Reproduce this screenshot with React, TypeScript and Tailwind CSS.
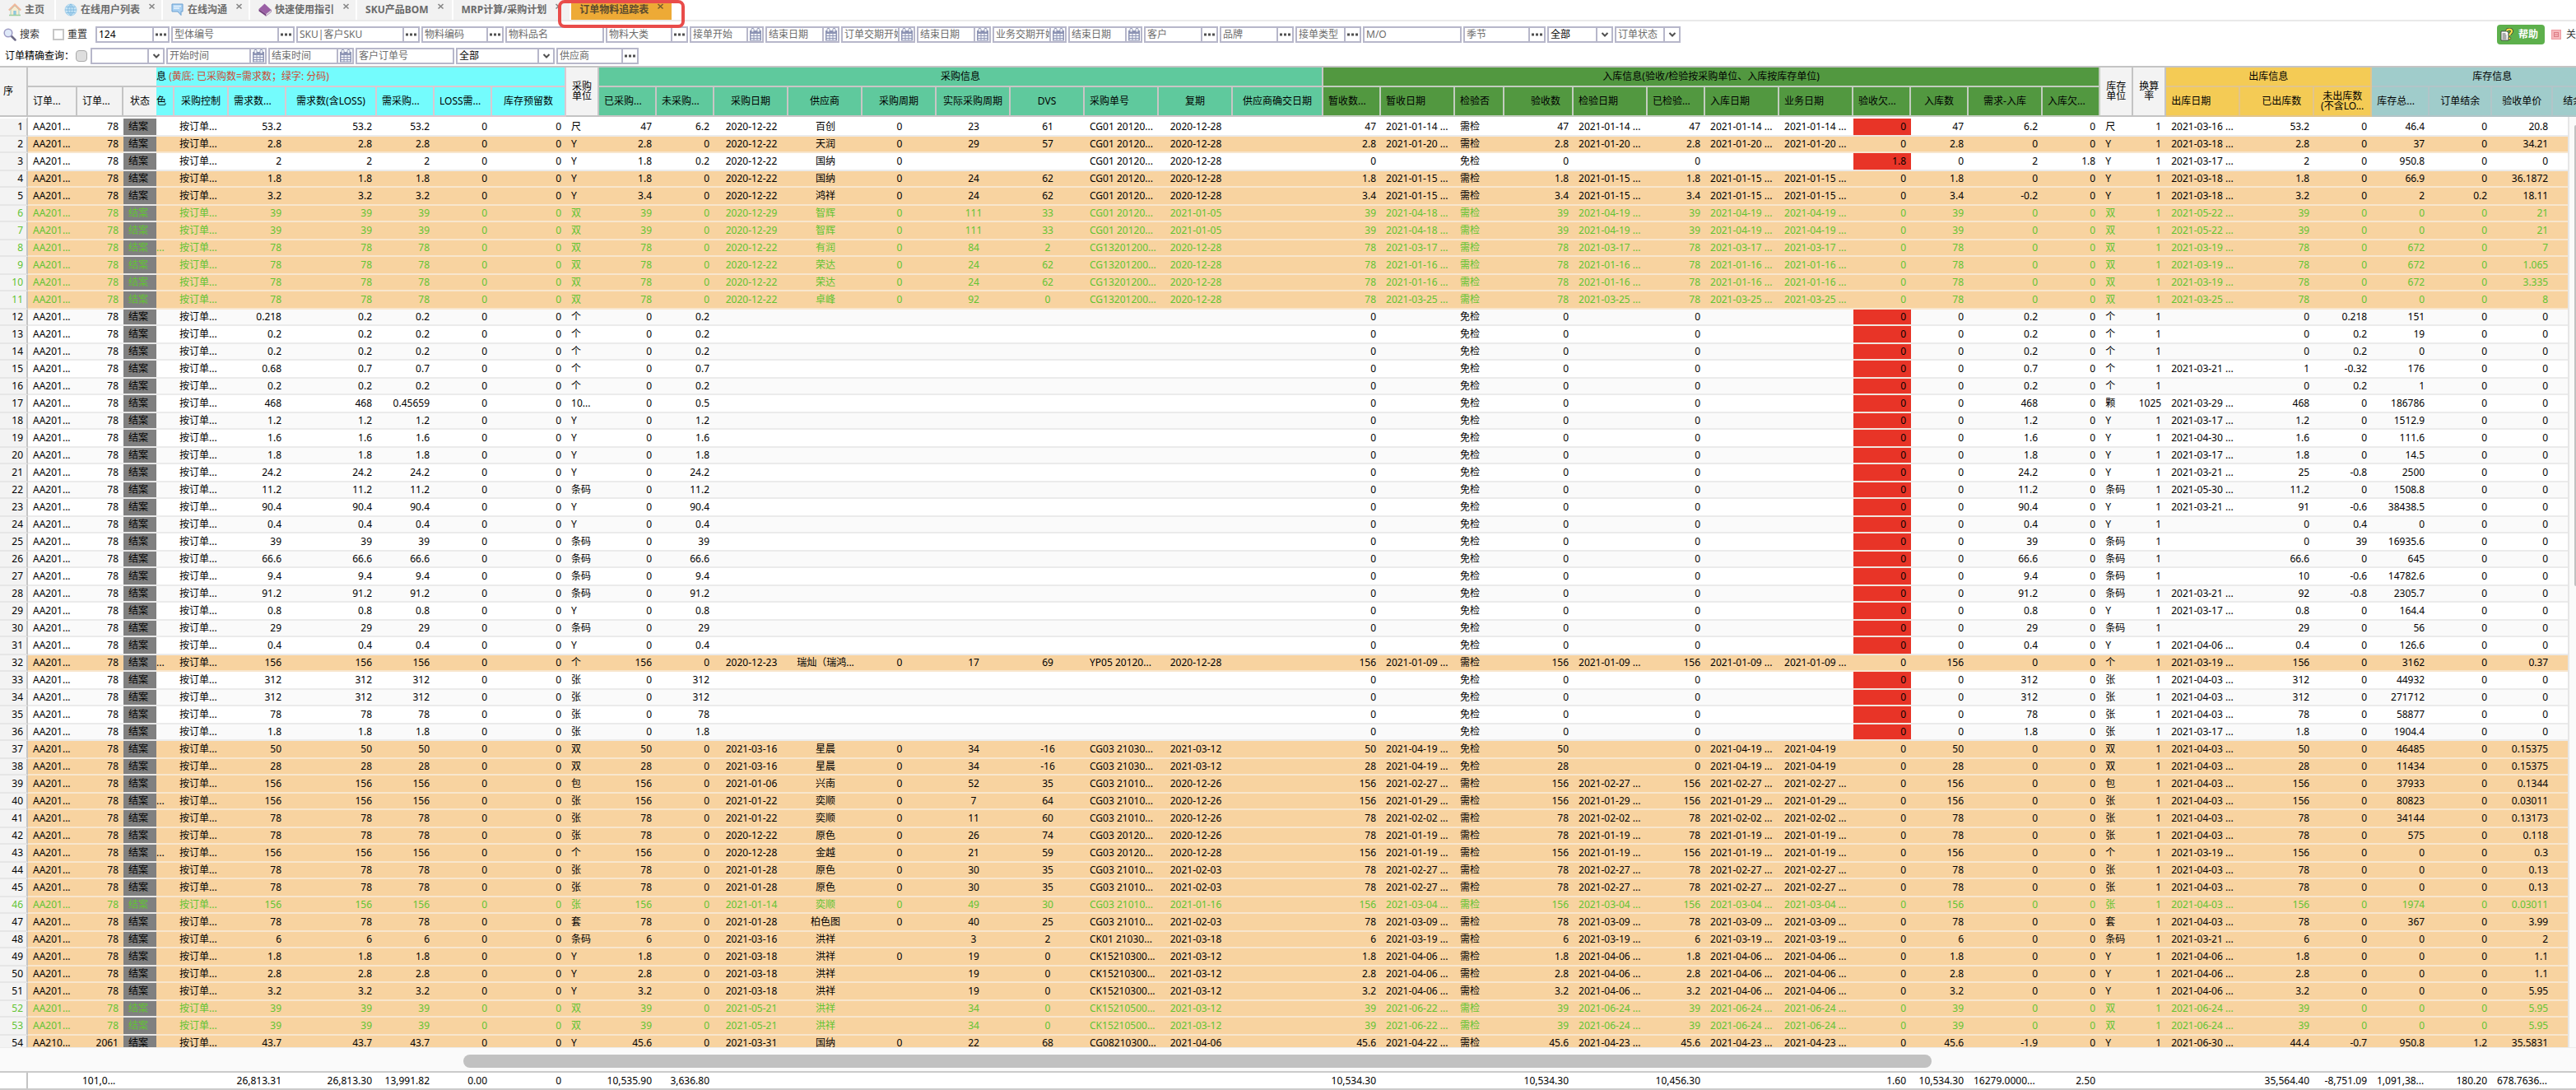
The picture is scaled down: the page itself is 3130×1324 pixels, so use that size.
import { useState } from "react";
import type { ReactNode } from "react";
import clsx from "clsx";

interface Row {
  order: string;
  qty: string;
  note: string;
  need: string;
  needLoss: string;
  needBuy: string;
  unit: string;
  bought: string;
  unbought: string;
  buyDate: string;
  supplier: string;
  cycle: string;
  realCycle: string;
  dvs: string;
  po: string;
  replyDate: string;
  recvQty: string;
  recvDate: string;
  check: string;
  acceptQty: string;
  inspDate: string;
  inspected: string;
  inDate: string;
  bizDate: string;
  owe: string;
  inQty: string;
  diff: string;
  inOwe: string;
  stockUnit: string;
  rate: string;
  outDate: string;
  outQty: string;
  notOut: string;
  stock: string;
  left: string;
  price: string;
  full: boolean;
  split: boolean;
}

const more = (s: string) => (s ? `${s} ...` : "");

// 未采购的物料
const idle = (
  need: string,
  unit: string,
  outDate: string,
  outQty: string,
  notOut: string,
  stock: string,
  extra: Partial<Row> = {}
): Row => ({
  order: "AA201...",
  qty: "78",
  note: "",
  need,
  needLoss: need,
  needBuy: need,
  unit,
  bought: "0",
  unbought: need,
  buyDate: "",
  supplier: "",
  cycle: "",
  realCycle: "",
  dvs: "",
  po: "",
  replyDate: "",
  recvQty: "0",
  recvDate: "",
  check: "免检",
  acceptQty: "0",
  inspDate: "",
  inspected: "0",
  inDate: "",
  bizDate: "",
  owe: "0",
  inQty: "0",
  diff: need,
  inOwe: "0",
  stockUnit: unit,
  rate: "1",
  outDate: more(outDate),
  outQty,
  notOut,
  stock,
  left: "0",
  price: "0",
  full: false,
  split: false,
  ...extra,
});

// 已采购的物料: buy = [日期, 供应商, 周期, 实际周期, DVS, 单号, 复期]
const done = (
  need: string,
  unit: string,
  buy: string[],
  inDate: string,
  outDate: string,
  stock: string,
  price: string,
  extra: Partial<Row> = {}
): Row => {
  const bought = extra.bought ?? need;
  return idle(need, unit, outDate, need, "0", stock, {
    bought,
    unbought: "0",
    buyDate: buy[0],
    supplier: buy[1],
    cycle: buy[2],
    realCycle: buy[3],
    dvs: buy[4],
    po: buy[5],
    replyDate: buy[6],
    recvQty: bought,
    recvDate: more(inDate),
    check: "需检",
    acceptQty: bought,
    inspDate: more(inDate),
    inspected: bought,
    inDate: more(inDate),
    bizDate: more(inDate),
    inQty: bought,
    diff: "0",
    price,
    full: true,
    ...extra,
  });
};

const green = { split: true };
const noted = { note: "..." };
const xingchen = ["2021-03-16", "星晨", "0", "34", "-16", "CG03 21030...", "2021-03-12"];
const noInspect = { check: "免检", inspDate: "", inspected: "0", bizDate: "2021-04-19" };
const zhihui = ["2020-12-29", "智辉", "0", "111", "33", "CG01 20120...", "2021-01-05"];
const rongda = ["2020-12-22", "荣达", "0", "24", "62", "CG13201200...", "2020-12-28"];
const yuanse = ["2021-01-28", "原色", "0", "30", "35", "CG03 21010...", "2021-02-03"];
const hongxiang = ["2021-05-21", "洪祥", "", "34", "0", "CK15210500...", "2021-03-12"];

const rows: Row[] = [
  done("53.2", "尺", ["2020-12-22", "百创", "0", "23", "61", "CG01 20120...", "2020-12-28"], "2021-01-14", "2021-03-16", "46.4", "20.8", { bought: "47", unbought: "6.2", diff: "6.2", full: false }),
  done("2.8", "Y", ["2020-12-22", "天润", "0", "29", "57", "CG01 20120...", "2020-12-28"], "2021-01-20", "2021-03-18", "37", "34.21"),
  idle("2", "Y", "2021-03-17", "2", "0", "950.8", { bought: "1.8", unbought: "0.2", buyDate: "2020-12-22", supplier: "国纳", cycle: "0", po: "CG01 20120...", replyDate: "2020-12-28", owe: "1.8", inOwe: "1.8" }),
  done("1.8", "Y", ["2020-12-22", "国纳", "0", "24", "62", "CG01 20120...", "2020-12-28"], "2021-01-15", "2021-03-18", "66.9", "36.1872"),
  done("3.2", "Y", ["2020-12-22", "鸿祥", "0", "24", "62", "CG01 20120...", "2020-12-28"], "2021-01-15", "2021-03-18", "2", "18.11", { bought: "3.4", diff: "-0.2", left: "0.2" }),
  done("39", "双", zhihui, "2021-04-19", "2021-05-22", "0", "21", { ...green, recvDate: "2021-04-18 ..." }),
  done("39", "双", zhihui, "2021-04-19", "2021-05-22", "0", "21", { ...green, recvDate: "2021-04-18 ..." }),
  done("78", "双", ["2020-12-22", "有润", "0", "84", "2", "CG13201200...", "2020-12-28"], "2021-03-17", "2021-03-19", "672", "7", { ...green, ...noted }),
  done("78", "双", rongda, "2021-01-16", "2021-03-19", "672", "1.065", green),
  done("78", "双", rongda, "2021-01-16", "2021-03-19", "672", "3.335", green),
  done("78", "双", ["2020-12-22", "卓峰", "0", "92", "0", "CG13201200...", "2020-12-28"], "2021-03-25", "2021-03-25", "0", "8", green),
  idle("0.2", "个", "", "0", "0.218", "151", { need: "0.218" }),
  idle("0.2", "个", "", "0", "0.2", "19"),
  idle("0.2", "个", "", "0", "0.2", "0"),
  idle("0.7", "个", "2021-03-21", "1", "-0.32", "176", { need: "0.68" }),
  idle("0.2", "个", "", "0", "0.2", "1"),
  idle("468", "10...", "2021-03-29", "468", "0", "186786", { needBuy: "0.45659", unbought: "0.5", stockUnit: "颗", rate: "1025" }),
  idle("1.2", "Y", "2021-03-17", "1.2", "0", "1512.9"),
  idle("1.6", "Y", "2021-04-30", "1.6", "0", "111.6"),
  idle("1.8", "Y", "2021-03-17", "1.8", "0", "14.5"),
  idle("24.2", "Y", "2021-03-21", "25", "-0.8", "2500"),
  idle("11.2", "条码", "2021-05-30", "11.2", "0", "1508.8"),
  idle("90.4", "Y", "2021-03-21", "91", "-0.6", "38438.5"),
  idle("0.4", "Y", "", "0", "0.4", "0"),
  idle("39", "条码", "", "0", "39", "16935.6"),
  idle("66.6", "条码", "", "66.6", "0", "645"),
  idle("9.4", "条码", "", "10", "-0.6", "14782.6"),
  idle("91.2", "条码", "2021-03-21", "92", "-0.8", "2305.7"),
  idle("0.8", "Y", "2021-03-17", "0.8", "0", "164.4"),
  idle("29", "条码", "", "29", "0", "56"),
  idle("0.4", "Y", "2021-04-06", "0.4", "0", "126.6"),
  done("156", "个", ["2020-12-23", "瑞灿（瑞鸿...", "0", "17", "69", "YP05 20120...", "2020-12-28"], "2021-01-09", "2021-03-19", "3162", "0.37", noted),
  idle("312", "张", "2021-04-03", "312", "0", "44932"),
  idle("312", "张", "2021-04-03", "312", "0", "271712"),
  idle("78", "张", "2021-04-03", "78", "0", "58877"),
  idle("1.8", "张", "2021-03-17", "1.8", "0", "1904.4"),
  done("50", "双", xingchen, "2021-04-19", "2021-04-03", "46485", "0.15375", noInspect),
  done("28", "双", xingchen, "2021-04-19", "2021-04-03", "11434", "0.15375", noInspect),
  done("156", "包", ["2021-01-06", "兴南", "0", "52", "35", "CG03 21010...", "2020-12-26"], "2021-02-27", "2021-04-03", "37933", "0.1344"),
  done("156", "张", ["2021-01-22", "奕顺", "0", "7", "64", "CG03 21010...", "2020-12-26"], "2021-01-29", "2021-04-03", "80823", "0.03011", noted),
  done("78", "张", ["2021-01-22", "奕顺", "0", "11", "60", "CG03 21010...", "2020-12-26"], "2021-02-02", "2021-04-03", "34144", "0.13173"),
  done("78", "张", ["2020-12-22", "原色", "0", "26", "74", "CG03 20120...", "2020-12-26"], "2021-01-19", "2021-04-03", "575", "0.118"),
  done("156", "个", ["2020-12-28", "金越", "0", "21", "59", "CG03 20120...", "2020-12-28"], "2021-01-19", "2021-03-19", "0", "0.3", noted),
  done("78", "张", yuanse, "2021-02-27", "2021-04-03", "0", "0.13"),
  done("78", "张", yuanse, "2021-02-27", "2021-04-03", "0", "0.13"),
  done("156", "张", ["2021-01-14", "奕顺", "0", "49", "30", "CG03 21010...", "2021-01-16"], "2021-03-04", "2021-04-03", "1974", "0.03011", green),
  done("78", "套", ["2021-01-28", "柏色图", "0", "40", "25", "CG03 21010...", "2021-02-03"], "2021-03-09", "2021-04-03", "367", "3.99"),
  done("6", "条码", ["2021-03-16", "洪祥", "", "3", "2", "CK01 21030...", "2021-03-18"], "2021-03-19", "2021-03-21", "0", "2"),
  done("1.8", "Y", ["2021-03-18", "洪祥", "0", "19", "0", "CK15210300...", "2021-03-12"], "2021-04-06", "2021-04-06", "0", "1.1"),
  done("2.8", "Y", ["2021-03-18", "洪祥", "", "19", "0", "CK15210300...", "2021-03-12"], "2021-04-06", "2021-04-06", "0", "1.1"),
  done("3.2", "Y", ["2021-03-18", "洪祥", "", "19", "0", "CK15210300...", "2021-03-12"], "2021-04-06", "2021-04-06", "0", "5.95"),
  done("39", "双", hongxiang, "2021-06-24", "2021-06-24", "0", "5.95", { ...green, recvDate: "2021-06-22 ..." }),
  done("39", "双", hongxiang, "2021-06-24", "2021-06-24", "0", "5.95", { ...green, recvDate: "2021-06-22 ..." }),
  done("43.7", "Y", ["2021-03-31", "国纳", "0", "22", "68", "CG08210300...", "2021-04-06"], "2021-04-23", "2021-06-30", "950.8", "35.5831", { order: "AA210...", qty: "2061", bought: "45.6", recvDate: "2021-04-22 ...", diff: "-1.9", outQty: "44.4", notOut: "-0.7", left: "1.2" }),
];

interface Column {
  id: string;
  label: string;
  width: string;
  get: (r: Row) => string;
  align?: string;
  head?: string;
  wrap?: boolean;
  total?: string;
  totalAlign?: string;
}

const R = "text-right";
const C = "text-center";
const L = "text-left";

const plain = "bg-[#f3f3f3] border-[#c4c4c4]";
const cyan = "bg-[#74fcfd] border-[#dcc8d0]";
const mint = "bg-[#5fc99d] border-[#c9c5c5]";
const leaf = "bg-[#529840] border-[#c3cdbf]";
const amber = "bg-[#f4cb55] border-[#e2c58c]";
const teal = "bg-[#a0cccb] border-[#b2c5c8]";

const frozen: Column[] = [
  { id: "order", label: "订单...", width: "w-[60px]", get: (r) => r.order, align: L },
  { id: "qty", label: "订单...", width: "w-[56px]", get: (r) => r.qty, total: "101,0...", totalAlign: L },
  { id: "status", label: "状态", width: "w-[40px]", get: () => "结案", align: L, head: C },
];

const need: Column[] = [
  { id: "note", label: "色", width: "w-[22px]", get: (r) => r.note, align: L },
  { id: "control", label: "采购控制", width: "w-[66px]", get: () => "按订单...", align: L, head: C },
  { id: "need", label: "需求数...", width: "w-[70px]", get: (r) => r.need, total: "26,813.31" },
  { id: "needLoss", label: "需求数(含LOSS)", width: "w-[110px]", get: (r) => r.needLoss, head: C, total: "26,813.30" },
  { id: "needBuy", label: "需采购...", width: "w-[70px]", get: (r) => r.needBuy, total: "13,991.82" },
  { id: "loss", label: "LOSS需...", width: "w-[70px]", get: () => "0", total: "0.00" },
  { id: "reserve", label: "库存预留数", width: "w-[90px]", get: () => "0", head: C, total: "0" },
];

const unitCol: Column = { id: "unit", label: "采购单位", width: "w-[40px]", get: (r) => r.unit, align: L };

const buy: Column[] = [
  { id: "bought", label: "已采购...", width: "w-[70px]", get: (r) => r.bought, total: "10,535.90" },
  { id: "unbought", label: "未采购...", width: "w-[70px]", get: (r) => r.unbought, total: "3,636.80" },
  { id: "buyDate", label: "采购日期", width: "w-[90px]", get: (r) => r.buyDate, align: C, head: C },
  { id: "supplier", label: "供应商", width: "w-[90px]", get: (r) => r.supplier, align: C, head: C },
  { id: "cycle", label: "采购周期", width: "w-[90px]", get: (r) => r.cycle, align: C, head: C },
  { id: "realCycle", label: "实际采购周期", width: "w-[90px]", get: (r) => r.realCycle, align: C, head: C },
  { id: "dvs", label: "DVS", width: "w-[90px]", get: (r) => r.dvs, align: C, head: C },
  { id: "po", label: "采购单号", width: "w-[90px]", get: (r) => r.po, align: L },
  { id: "replyDate", label: "复期", width: "w-[90px]", get: (r) => r.replyDate, align: C, head: C },
  { id: "confirm", label: "供应商确交日期", width: "w-[110px]", get: () => "", head: C },
];

const stockIn: Column[] = [
  { id: "recvQty", label: "暂收数...", width: "w-[70px]", get: (r) => r.recvQty, total: "10,534.30" },
  { id: "recvDate", label: "暂收日期", width: "w-[90px]", get: (r) => r.recvDate, align: L },
  { id: "check", label: "检验否", width: "w-[60px]", get: (r) => r.check, align: L },
  { id: "acceptQty", label: "验收数", width: "w-[84px]", get: (r) => r.acceptQty, head: "text-right pr-3.5", total: "10,534.30" },
  { id: "inspDate", label: "检验日期", width: "w-[90px]", get: (r) => r.inspDate, align: L },
  { id: "inspected", label: "已检验...", width: "w-[70px]", get: (r) => r.inspected, total: "10,456.30" },
  { id: "inDate", label: "入库日期", width: "w-[90px]", get: (r) => r.inDate, align: L },
  { id: "bizDate", label: "业务日期", width: "w-[90px]", get: (r) => r.bizDate, align: L },
  { id: "owe", label: "验收欠...", width: "w-[70px]", get: (r) => r.owe, total: "1.60" },
  { id: "inQty", label: "入库数", width: "w-[70px]", get: (r) => r.inQty, head: C, total: "10,534.30" },
  { id: "diff", label: "需求-入库", width: "w-[90px]", get: (r) => r.diff, head: C, total: "16279.0000...", totalAlign: L },
  { id: "inOwe", label: "入库欠...", width: "w-[70px]", get: (r) => r.inOwe, total: "2.50" },
];

const stockUnitCol: Column = { id: "stockUnit", label: "库存单位", width: "w-[40px]", get: (r) => r.stockUnit, align: L };
const rateCol: Column = { id: "rate", label: "换算率", width: "w-[40px]", get: (r) => r.rate };

const stockOut: Column[] = [
  { id: "outDate", label: "出库日期", width: "w-[90px]", get: (r) => r.outDate, align: L },
  { id: "outQty", label: "已出库数", width: "w-[90px]", get: (r) => r.outQty, head: "text-right pr-3.5", total: "35,564.40" },
  { id: "notOut", label: "未出库数 (不含LO...", width: "w-[70px]", get: (r) => r.notOut, head: C, wrap: true, total: "-8,751.09" },
];

const stock: Column[] = [
  { id: "stock", label: "库存总...", width: "w-[70px]", get: (r) => r.stock, total: "1,091,38...", totalAlign: L },
  { id: "left", label: "订单结余", width: "w-[76px]", get: (r) => r.left, head: C, total: "180.20" },
  { id: "price", label: "验收单价", width: "w-[74px]", get: (r) => r.price, head: C, total: "678.7636...", totalAlign: L },
  { id: "remain", label: "结余单价", width: "w-[74px]", get: () => "", head: C },
];

const groups = [
  { cols: need, tone: cyan },
  { cols: buy, tone: mint },
  { cols: stockIn, tone: leaf },
  { cols: stockOut, tone: amber },
  { cols: stock, tone: teal },
];

const columns: Column[] = [
  ...frozen,
  ...need,
  unitCol,
  ...buy,
  ...stockIn,
  stockUnitCol,
  rateCol,
  ...stockOut,
  ...stock,
];

const Cols = () => (
  <colgroup>
    <col className="w-[34px]" />
    {columns.map((c) => (
      <col key={c.id} className={c.width} />
    ))}
  </colgroup>
);

const th = "overflow-hidden border-b-2 font-normal";
const single = "border-r-2 whitespace-nowrap";
const tall = "border-r-2 px-1.5 leading-3";

const TableHead = () => (
  <thead>
    <tr className="h-6">
      <th rowSpan={2} className={clsx(th, plain, single, "px-1 text-left")}>序</th>
      <th colSpan={3} className={clsx(th, plain)} />
      <th colSpan={need.length} className={clsx(th, cyan, single, "text-left")}>
        息 <span className="text-[#d04a35]">(黄底: 已采购数=需求数；绿字: 分码)</span>
      </th>
      <th rowSpan={2} className={clsx(th, plain, tall)}>{unitCol.label}</th>
      <th colSpan={buy.length} className={clsx(th, mint, single)}>采购信息</th>
      <th colSpan={stockIn.length} className={clsx(th, leaf, single)}>
        入库信息(验收/检验按采购单位、入库按库存单位)
      </th>
      <th rowSpan={2} className={clsx(th, plain, tall)}>{stockUnitCol.label}</th>
      <th rowSpan={2} className={clsx(th, plain, tall)}>{rateCol.label}</th>
      <th colSpan={stockOut.length} className={clsx(th, amber, single)}>出库信息</th>
      <th colSpan={stock.length} className={clsx(th, teal, single)}>库存信息</th>
    </tr>
    <tr className="h-9">
      {frozen.map((c) => (
        <th key={c.id} className={clsx(th, plain, "px-1.5", c.head ?? L, c.id !== "status" && single)}>
          {c.label}
        </th>
      ))}
      {groups.map((g) =>
        g.cols.map((c) => (
          <th
            key={c.id}
            className={clsx(th, g.tone, c.id === "note" ? "px-0" : c.wrap ? "px-1" : "px-1.5", c.wrap ? "border-r-2 leading-3" : single, c.head ?? L)}
          >
            {c.label}
          </th>
        ))
      )}
    </tr>
  </thead>
);

const BodyRow = ({ row, index }: { row: Row; index: number }) => {
  const tone = row.full
    ? "bg-[#f8d3a0] border-[#f8e6cd]"
    : index % 2
      ? "bg-[#fafafa] border-[#ebebeb]"
      : "bg-white border-[#ebebeb]";
  return (
    <tr className={clsx(index % 2 ? "h-5" : "h-[22px]", row.split && "text-[#62c332]")}>
      <td className="border-r-2 border-b-2 border-r-[#c4c4c4] border-b-[#e6e6e6] bg-[#f3f3f3] pr-1 text-right">
        {index + 1}
      </td>
      {columns.map((c) => (
        <td
          key={c.id}
          className={clsx(
            "overflow-hidden border-b-2 whitespace-nowrap",
            c.id === "note" ? "px-0" : "px-1.5",
            c.align ?? R,
            c.id === "status"
              ? "border-[#e6e6e6] bg-[#808080]"
              : c.id === "owe" && !row.full
                ? "border-[#f0e4dc] bg-[#e83427]"
                : tone
          )}
        >
          {c.get(row)}
        </td>
      ))}
    </tr>
  );
};

const CalendarIcon = () => (
  <svg viewBox="0 0 16 16" className="size-4" aria-hidden="true">
    <rect x="1" y="3" width="14" height="12.5" fill="#8d94b4" />
    <rect x="3" y="0.5" width="3" height="4.5" rx="1" fill="#fff" stroke="#8d94b4" />
    <rect x="10" y="0.5" width="3" height="4.5" rx="1" fill="#fff" stroke="#8d94b4" />
    <path d="M2.5 7h3v2h-3zM6.5 7h3v2h-3zM10.5 7h3v2h-3zM2.5 10h3v2h-3zM6.5 10h3v2h-3zM10.5 10h3v2h-3zM2.5 13h3v1.5h-3zM6.5 13h3v1.5h-3zM10.5 13h3v1.5h-3z" fill="#f4f6fb" />
  </svg>
);

const DotsIcon = () => (
  <svg viewBox="0 0 15 4" className="h-1 w-[15px]" aria-hidden="true">
    <path d="M1 0.5h3v3H1zM6 0.5h3v3H6zM11 0.5h3v3h-3z" fill="#505050" />
  </svg>
);

const ChevronIcon = () => (
  <svg viewBox="0 0 10 6" className="h-1.5 w-2.5" aria-hidden="true">
    <path d="M1.5 1l3.5 3.5L8.5 1" fill="none" stroke="#505050" strokeWidth="2" />
  </svg>
);

const box = "flex h-5 shrink-0 border-2 border-[#b7b7ca] bg-white";
const side = "flex w-[17px] shrink-0 items-center justify-center border-l-2 border-[#b7b7ca] box-content";

interface FieldProps {
  label: string;
  width: string;
  kind?: "text" | "lookup" | "date";
  value?: string;
}

const Field = ({ label, width, kind = "text", value = "" }: FieldProps) => {
  const [text, setText] = useState(value);
  return (
    <div className={clsx(box, width)}>
      <input
        aria-label={label}
        placeholder={value ? "" : label}
        value={text}
        onChange={(e) => setText(e.target.value)}
        className="w-0 min-w-0 flex-1 pl-0.5 leading-4 outline-none placeholder:text-[#6c6c6c]"
      />
      {kind === "lookup" && (
        <button type="button" aria-label={`选择${label}`} className={side}>
          <DotsIcon />
        </button>
      )}
      {kind === "date" && (
        <button type="button" aria-label={`选择${label}`} className={side}>
          <CalendarIcon />
        </button>
      )}
    </div>
  );
};

const Choice = ({ label, width, option, dim }: { label: string; width: string; option: string; dim?: boolean }) => (
  <div className={clsx(box, width)}>
    <select
      aria-label={label}
      className={clsx("w-0 min-w-0 flex-1 appearance-none pl-0.5 leading-4 outline-none", dim && "text-[#6c6c6c]")}
    >
      <option>{option}</option>
    </select>
    <span className={side}>
      <ChevronIcon />
    </span>
  </div>
);

const HomeIcon = () => (
  <svg viewBox="0 0 16 16" className="size-4" aria-hidden="true">
    <path d="M3 8v6.5h10V8L8 3z" fill="#f7ecd0" stroke="#a8d0c4" />
    <path d="M0.8 8.5L8 1.5l7.2 7" fill="none" stroke="#f0b79a" strokeWidth="2" />
    <rect x="6.3" y="9" width="3.4" height="5.5" fill="#8fc8de" />
    <path d="M1 14.5h14" stroke="#9ccf9c" strokeWidth="1.5" />
  </svg>
);

const GlobeIcon = () => (
  <svg viewBox="0 0 16 16" className="size-4" aria-hidden="true">
    <circle cx="8" cy="8" r="7" fill="#c4e3f5" stroke="#a9d2ec" />
    <path d="M1 8h14M8 1v14M2.5 4.5h11M2.5 11.5h11M8 1C3.5 5 3.5 11 8 15M8 1c4.5 4 4.5 10 0 14" fill="none" stroke="#86bde2" />
  </svg>
);

const ChatIcon = () => (
  <svg viewBox="0 0 16 16" className="size-4" aria-hidden="true">
    <path d="M1 1h13v9h-2v4.5L8 10H1z" fill="#a9d0f2" stroke="#6b9fd0" />
    <path d="M3 3.5h9M3 6h7" stroke="#e9f4fd" strokeWidth="1.5" />
  </svg>
);

const BookIcon = () => (
  <svg viewBox="0 0 16 16" className="size-4" aria-hidden="true">
    <path d="M0.5 7L7.5 0.5 15.5 8 9 13z" fill="#9a5fa5" />
    <path d="M0.5 7v2.5L9 15.5V13z" fill="#75407f" />
    <path d="M9 13l6.5-5v2.5L9 15.5z" fill="#e6dfe8" stroke="#75407f" strokeWidth="0.5" />
  </svg>
);

const SearchIcon = () => (
  <svg viewBox="0 0 16 16" className="size-4" aria-hidden="true">
    <path d="M9.5 9.5l5 5" stroke="#6d6a86" strokeWidth="2.5" strokeLinecap="round" />
    <circle cx="6" cy="6" r="4.8" fill="#dfe9f8" stroke="#9d9bc4" strokeWidth="1.5" />
  </svg>
);

const HelpIcon = () => (
  <svg viewBox="0 0 16 16" className="size-4" aria-hidden="true">
    <path d="M1 4h7l2 2v9H1z" fill="#fff" stroke="#333" strokeWidth="0.8" />
    <path d="M2.5 7h4M2.5 9h5M2.5 11h5M2.5 13h5" stroke="#555" />
    <path d="M8 3.5C8.5 1 14 1 14 4c0 2.5-2.8 2.3-2.8 5" fill="none" stroke="#333" strokeWidth="3.6" />
    <path d="M8 3.5C8.5 1 14 1 14 4c0 2.5-2.8 2.3-2.8 5" fill="none" stroke="#f7e04a" strokeWidth="2.2" />
    <circle cx="11.2" cy="12.5" r="1.5" fill="#f7e04a" stroke="#333" strokeWidth="0.7" />
  </svg>
);

const CloseIcon = () => (
  <svg viewBox="0 0 12 12" className="size-3" aria-hidden="true">
    <rect x="0.5" y="0.5" width="11" height="11" fill="#f6b9bd" stroke="#ee9ca2" />
    <path d="M3 3.5h6M3 6h6M3 8.5h6M3.5 3v6M8.5 3v6" stroke="#dd7c85" />
  </svg>
);

const tabs: { label: string; icon?: ReactNode; fixed?: boolean }[] = [
  { label: "主页", icon: <HomeIcon />, fixed: true },
  { label: "在线用户列表", icon: <GlobeIcon /> },
  { label: "在线沟通", icon: <ChatIcon /> },
  { label: "快速使用指引", icon: <BookIcon /> },
  { label: "SKU产品BOM" },
  { label: "MRP计算/采购计划" },
  { label: "订单物料追踪表" },
];

const TabBar = () => {
  const [active, setActive] = useState("订单物料追踪表");
  return (
    <nav className="flex h-[26px] shrink-0 items-start gap-0.5 border-b-2 border-[#e9e9e9]">
      {tabs.map((t) => (
        <div
          key={t.label}
          className={clsx(
            "relative flex h-6 shrink-0 pl-2.5",
            t.fixed ? "pr-3" : t.icon ? "pr-1.5" : "pr-2",
            t.label === active ? "bg-[#edaa36] text-[#5a4a2e]" : "bg-[#f2f2f2] text-[#6a6a6a]"
          )}
        >
          <button type="button" onClick={() => setActive(t.label)} className="flex items-center gap-1 font-bold whitespace-nowrap">
            {t.icon}
            {t.label}
          </button>
          {!t.fixed && (
            <button type="button" aria-label={`关闭${t.label}`} className="mt-1 ml-2.5 size-2.5">
              <svg viewBox="0 0 10 10" className="size-2.5" aria-hidden="true">
                <path d="M1.5 1l6 5.5M7.5 1l-6 5.5" stroke="currentColor" strokeWidth="1.6" opacity="0.8" />
              </svg>
            </button>
          )}
          {t.label === active && (
            <span className="pointer-events-none absolute top-0 -right-4 -left-4 h-[34px] rounded-lg border-4 border-[#e94c4a]" />
          )}
        </div>
      ))}
    </nav>
  );
};

const Toolbar = () => (
  <form className="flex shrink-0 flex-col gap-1.5 pt-1.5 pb-0.5" onSubmit={(e) => e.preventDefault()}>
    <div className="flex h-5 items-center gap-0.5">
      <div className="flex w-[114px] shrink-0 items-center pl-1 text-[#333]">
        <button type="submit" className="flex items-center gap-1">
          <SearchIcon />
          搜索
        </button>
        <label className="ml-4 flex items-center gap-1">
          <input type="checkbox" className="size-3.5 appearance-none border-2 border-[#c6c6c6] bg-white" />
          重置
        </label>
      </div>
      <Field label="订单号" width="w-[90px]" kind="lookup" value="124" />
      <Field label="型体编号" width="w-[150px]" kind="lookup" />
      <Field label="SKU|客户SKU" width="w-[150px]" kind="lookup" />
      <Field label="物料编码" width="w-[100px]" kind="lookup" />
      <Field label="物料品名" width="w-[120px]" />
      <Field label="物料大类" width="w-[100px]" kind="lookup" />
      <Field label="接单开始" width="w-[90px]" kind="date" />
      <Field label="结束日期" width="w-[90px]" kind="date" />
      <Field label="订单交期开始" width="w-[90px]" kind="date" />
      <Field label="结束日期" width="w-[90px]" kind="date" />
      <Field label="业务交期开始" width="w-[90px]" kind="date" />
      <Field label="结束日期" width="w-[90px]" kind="date" />
      <Field label="客户" width="w-[90px]" kind="lookup" />
      <Field label="品牌" width="w-[90px]" kind="lookup" />
      <Field label="接单类型" width="w-[80px]" kind="lookup" />
      <Field label="M/O" width="w-[120px]" />
      <Field label="季节" width="w-[100px]" kind="lookup" />
      <Choice label="范围" width="w-[80px]" option="全部" />
      <Choice label="订单状态" width="w-[80px]" option="订单状态" dim />
      <div className="-mr-3 ml-auto flex shrink-0 items-center gap-2">
        <button type="button" className="flex h-6 items-center gap-1.5 rounded bg-[#5db04c] px-1 pr-2 font-bold text-white">
          <HelpIcon />
          帮助
        </button>
        <button type="button" className="flex items-center gap-1.5 whitespace-nowrap text-[#333]">
          <CloseIcon />
          关闭
        </button>
      </div>
    </div>
    <div className="flex h-5 items-center gap-0.5">
      <label className="flex w-[108px] shrink-0 items-center justify-between pr-0.5 pl-1.5 whitespace-nowrap">
        订单精确查询：
        <input type="checkbox" className="size-3.5 appearance-none rounded-sm border border-[#a9a9a9] bg-[#dedede]" />
      </label>
      <Choice label="查询方式" width="w-[90px]" option="" />
      <Field label="开始时间" width="w-[122px]" kind="date" />
      <Field label="结束时间" width="w-[104px]" kind="date" />
      <Field label="客户订单号" width="w-[120px]" />
      <Choice label="类别" width="w-[120px]" option="全部" />
      <Field label="供应商" width="w-[100px]" kind="lookup" />
    </div>
  </form>
);

const table = "w-full table-fixed border-separate border-spacing-0";

export default function App() {
  return (
    <div className="flex h-screen flex-col overflow-hidden bg-white font-['Noto_Sans','Noto_Sans_CJK_SC',sans-serif] text-[12px] leading-4 text-black">
      <TabBar />
      <Toolbar />
      <main className="relative min-h-0 flex-1 overflow-hidden border-t-2 border-[#c4c4c4]">
        <table className={table}>
          <Cols />
          <TableHead />
          <tbody className="[&>tr:first-child]:h-6 [&>tr:first-child>td]:border-t-2 [&>tr:first-child>td]:border-t-white">
            {rows.map((r, i) => (
              <BodyRow key={i} row={r} index={i} />
            ))}
          </tbody>
        </table>
        <div className="absolute top-[60px] right-0 bottom-0 w-2.5 border-l-2 border-[#e6e6e6] bg-[#fafafa] pt-2.5 pl-1.5">
          <div className="h-1/2 rounded-l-full bg-[#c1c1c1]" />
        </div>
      </main>
      <div className="h-[29px] shrink-0 border-t border-[#ececec] bg-[#fafafa] pt-2">
        <div className="ml-[18%] h-4 w-[57%] rounded-full bg-[#c1c1c1]" />
      </div>
      <footer className="shrink-0 overflow-hidden border-y-2 border-[#cbcbcb]">
        <table className={table}>
          <Cols />
          <tbody>
            <tr className="h-[19px]">
              <td className="border-r-2 border-[#c4c4c4]" />
              {columns.map((c) => (
                <td key={c.id} className={clsx("overflow-hidden px-1.5 whitespace-nowrap", c.totalAlign ?? R)}>
                  {c.total}
                </td>
              ))}
            </tr>
          </tbody>
        </table>
      </footer>
    </div>
  );
}
